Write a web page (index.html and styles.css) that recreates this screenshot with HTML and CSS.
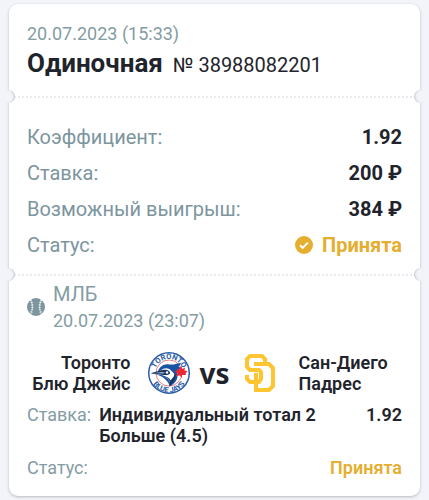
FILE: index.html
```html
<!DOCTYPE html>
<html lang="ru">
<head>
  <meta charset="utf-8">
  <meta name="viewport" content="width=device-width, initial-scale=1">
  <title>Одиночная № 38988082201</title>
  <link rel="stylesheet" href="styles.css">
</head>
<body>
  <main class="coupon">
    <header class="coupon-head">
      <div class="coupon-date">20.07.2023 (15:33)</div>
      <div class="coupon-title">
        <h1>Одиночная</h1>
        <span class="coupon-number">№ 38988082201</span>
      </div>
    </header>

    <dl class="coupon-info tear">
      <div class="row"><dt>Коэффициент:</dt><dd>1.92</dd></div>
      <div class="row"><dt>Ставка:</dt><dd>200 ₽</dd></div>
      <div class="row"><dt>Возможный выигрыш:</dt><dd>384 ₽</dd></div>
      <div class="row">
        <dt>Статус:</dt>
        <dd class="accepted">
          <svg class="check" viewBox="0 0 18 18" aria-hidden="true">
            <circle cx="9" cy="9" r="9" fill="#e5ae2f"/>
            <path d="M5 9.2l2.7 2.6L13 6.6" fill="none" stroke="#fff" stroke-width="2"/>
          </svg>
          Принята
        </dd>
      </div>
    </dl>

    <section class="event tear">
      <div class="league">
        <svg class="ball" viewBox="0 0 18 18" aria-hidden="true">
          <circle cx="9" cy="9" r="9" fill="#7c959e"/>
          <g fill="none" stroke="#fff">
            <path d="M3.5 2C6 6 6 12 3.5 16M14.5 2C12 6 12 12 14.5 16" stroke-width=".6"/>
            <path d="M3.5 2C6 6 6 12 3.5 16M14.5 2C12 6 12 12 14.5 16" stroke-width="2" stroke-dasharray=".8 1.6"/>
          </g>
        </svg>
        <div>
          <div class="league-name">МЛБ</div>
          <div class="league-date">20.07.2023 (23:07)</div>
        </div>
      </div>

      <div class="teams">
        <div class="team team-home">Торонто<br>Блю Джейс</div>
        <div class="versus">
          <svg class="logo" viewBox="0 0 84 84" role="img" aria-label="Toronto Blue Jays">
            <defs>
              <path id="arc-top" d="M14 42a28 28 0 0 1 56 0"/>
              <path id="arc-bottom" d="M3 42a39 39 0 0 0 78 0"/>
            </defs>
            <circle cx="42" cy="42" r="40.5" fill="#fff" stroke="#2a5ca8" stroke-width="3"/>
            <circle cx="42" cy="42" r="26" fill="#fff" stroke="#dc5a55" stroke-width="1.5"/>
            <text class="logo-text"><textPath href="#arc-top" startOffset="50%">TORONTO</textPath></text>
            <text class="logo-text"><textPath href="#arc-bottom" startOffset="50%">BLUE JAYS</textPath></text>
            <path d="M20 38C24 29 32 23 42 25C52 26 60 23 67 21L61 30L67 31L60 37L65 39L58 43C62 55 53 64 43 69C42 61 37 56 29 50L18 45L6 43Z" fill="#1754a4"/>
            <path d="M26 37C31 31 41 31 46 37L53 44C53 52 48 56 44 61C41 54 36 48 27 46L7 43Z" fill="#fff"/>
            <path d="M7 42L29 36C38 34 45 38 44 43C38 49 29 45 7 43Z" fill="#19345e"/>
            <path d="M11 42L29 40L35 42L29 43Z" fill="#a9bdcf"/>
            <circle cx="38" cy="41" r="2.5" fill="#fff"/>
            <path d="M44 62C43 55 38 50 31 48C39 49 44 53 45 57C49 52 54 48 53 41C59 51 52 58 43 69Z" fill="#19345e"/>
            <path d="M66 28L69 34L74 31L73 37L79 38L75 43L76 46L68 46L67 52L64 47L56 48L59 43L53 38L59 37L58 33L63 35Z" fill="#ed2636"/>
          </svg>
          <span class="vs">vs</span>
          <svg class="logo" viewBox="0 0 42 42" role="img" aria-label="San Diego Padres">
            <g fill="none" stroke="#fdc52f" stroke-width="4">
              <path d="M26 10V7L23 4H11L8 7V15L11 18H20L22 20V27L20 30H11L8 27V23"/>
              <path d="M15 12H30L34 16V34L30 38H15M17 38V21"/>
            </g>
          </svg>
        </div>
        <div class="team">Сан-Диего<br>Падрес</div>
      </div>

      <div class="bet">
        <span class="bet-label">Ставка:</span>
        <b class="bet-name">Индивидуальный тотал 2 Больше (4.5)</b>
        <b>1.92</b>
      </div>
      <div class="bet bet-status">
        <span class="bet-label">Статус:</span>
        <b class="accepted">Принята</b>
      </div>
    </section>
  </main>
</body>
</html>
```
FILE: styles.css
```css
* {
  box-sizing: border-box;
}

body {
  margin: 0;
  padding: 4px 9px;
  background: #f3f4f9;
  color: #1f242c;
  font-family: Roboto, "Noto Sans", sans-serif;
}

.coupon {
  background: #fff;
  border-radius: 9px;
  box-shadow: 0 1px 3px rgba(40, 50, 70, 0.3);
}

.coupon-head {
  padding: 18px 18px 14px;
}

.coupon-date {
  color: #849ca4;
  font-size: 18px;
  line-height: 24px;
}

.coupon-title {
  display: flex;
  align-items: baseline;
  gap: 10px;
  line-height: 34px;
}

.coupon-title h1 {
  margin: 0;
  font-size: 26px;
  font-weight: 700;
}

.coupon-number {
  font-size: 20px;
}

/* линия отрыва с вырезами по краям */
.tear {
  position: relative;
  border-top: 2px dotted #e9eaef;
}

.tear::before,
.tear::after {
  content: "";
  position: absolute;
  top: -8px;
  width: 10px;
  height: 13px;
  background: #f3f4f9;
}

.tear::before {
  left: -4px;
  border-radius: 0 7px 7px 0;
  box-shadow: inset -2px 0 2px -1px rgba(40, 50, 70, 0.25);
}

.tear::after {
  right: -4px;
  border-radius: 7px 0 0 7px;
  box-shadow: inset 2px 0 2px -1px rgba(40, 50, 70, 0.25);
}

.coupon-info {
  margin: 0;
  padding: 21px 18px 11px;
}

.row {
  display: flex;
  justify-content: space-between;
  font-size: 20px;
  line-height: 36px;
}

.row dt {
  color: #7c959e;
}

.row dd {
  margin: 0;
  font-weight: 700;
}

.row .accepted {
  display: flex;
  align-items: center;
  gap: 9px;
}

.accepted {
  color: #e5ae2f;
}

.check,
.ball {
  width: 18px;
  height: 18px;
  flex: none;
}

.event {
  padding: 4px 18px 18px;
}

.league {
  display: flex;
  align-items: center;
  gap: 8px;
  color: #849ca4;
}

.league-name {
  font-size: 20px;
  line-height: 28px;
}

.league-date {
  font-size: 18px;
  line-height: 26px;
}

.teams {
  display: grid;
  grid-template-columns: 1fr auto 1fr;
  align-items: center;
  column-gap: 18px;
  margin-top: 18px;
  font-size: 18px;
  font-weight: 600;
  line-height: 21px;
}

.team-home {
  text-align: right;
}

.versus {
  display: flex;
  align-items: center;
  gap: 9px;
}

.logo {
  width: 42px;
  height: 42px;
}

.logo-text {
  fill: #2a5ca8;
  font-size: 15px;
  font-weight: 700;
  text-anchor: middle;
}

.vs {
  font-family: "Noto Sans", sans-serif;
  font-size: 28px;
  font-weight: 700;
}

.bet {
  display: flex;
  gap: 8px;
  margin-top: 10px;
  font-size: 18px;
  line-height: 21px;
}

.bet b {
  font-weight: 600;
}

.bet-label {
  color: #849ca4;
}

.bet-name {
  flex: 1;
}

.bet-status {
  justify-content: space-between;
  margin-top: 11px;
}
```
